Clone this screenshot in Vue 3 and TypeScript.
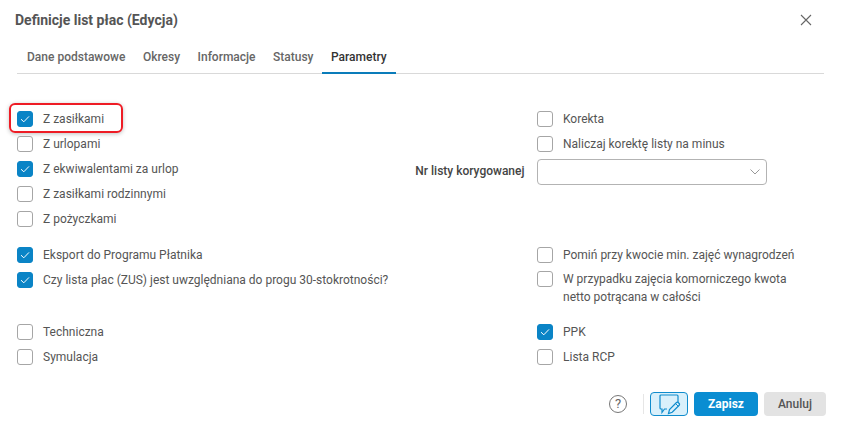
<script setup lang="ts">
interface Item { label: string; checked?: boolean }
const tabs = ['Dane podstawowe', 'Okresy', 'Informacje', 'Statusy', 'Parametry']
const groupA: Item[] = [
  { label: 'Z urlopami' },
  { label: 'Z ekwiwalentami za urlop', checked: true },
  { label: 'Z zasiłkami rodzinnymi' },
  { label: 'Z pożyczkami' },
]
const groupB: Item[] = [
  { label: 'Eksport do Programu Płatnika', checked: true },
  { label: 'Czy lista płac (ZUS) jest uwzględniana do progu 30-stokrotności?', checked: true },
]
const groupC: Item[] = [{ label: 'Techniczna' }, { label: 'Symulacja' }]
const groupD: Item[] = [{ label: 'PPK', checked: true }, { label: 'Lista RCP' }]
</script>

<template>
  <div class="dialog">
    <header class="head">
      <h1>Definicje list płac (Edycja)</h1>
      <svg class="close" width="12" height="12" viewBox="0 0 12 12"><path d="M1 1l10 10M11 1L1 11" stroke="#666" stroke-width="1.1" fill="none" /></svg>
    </header>
    <nav class="tabs">
      <span v-for="(t, i) in tabs" :key="t" class="tab" :class="{ active: i === 4 }">{{ t }}</span>
    </nav>
    <main class="body">
      <section class="grid first">
        <div class="col">
          <label class="row highlighted">
            <span class="box on"><svg width="16" height="16" viewBox="0 0 16 16"><path d="M4 8.2l2.8 2.6L12 5.4" stroke="#fff" stroke-width="1" fill="none" /></svg></span>
            <span>Z zasiłkami</span>
          </label>
          <label v-for="it in groupA" :key="it.label" class="row">
            <span class="box" :class="{ on: it.checked }"><svg v-if="it.checked" width="16" height="16" viewBox="0 0 16 16"><path d="M4 8.2l2.8 2.6L12 5.4" stroke="#fff" stroke-width="1" fill="none" /></svg></span>
            <span>{{ it.label }}</span>
          </label>
        </div>
        <div class="col right">
          <label class="row"><span class="box"></span><span>Korekta</span></label>
          <label class="row"><span class="box"></span><span>Naliczaj korektę listy na minus</span></label>
          <div class="select-row">
            <span class="select-label">Nr listy korygowanej</span>
            <div class="select">
              <svg width="10" height="6" viewBox="0 0 10 6"><path d="M.5.5L5 5 9.5.5" stroke="#999" stroke-width="1" fill="none" /></svg>
            </div>
          </div>
        </div>
      </section>
      <section class="grid second">
        <div class="col">
          <label v-for="it in groupB" :key="it.label" class="row">
            <span class="box" :class="{ on: it.checked }"><svg width="16" height="16" viewBox="0 0 16 16"><path d="M4 8.2l2.8 2.6L12 5.4" stroke="#fff" stroke-width="1" fill="none" /></svg></span>
            <span>{{ it.label }}</span>
          </label>
        </div>
        <div class="col right">
          <label class="row"><span class="box"></span><span>Pomiń przy kwocie min. zajęć wynagrodzeń</span></label>
          <label class="row tall"><span class="box"></span><span class="wrap">W przypadku zajęcia komorniczego kwota netto potrącana w całości</span></label>
        </div>
      </section>
      <section class="grid third">
        <div class="col">
          <label v-for="it in groupC" :key="it.label" class="row"><span class="box"></span><span>{{ it.label }}</span></label>
        </div>
        <div class="col right">
          <label v-for="it in groupD" :key="it.label" class="row">
            <span class="box" :class="{ on: it.checked }"><svg v-if="it.checked" width="16" height="16" viewBox="0 0 16 16"><path d="M4 8.2l2.8 2.6L12 5.4" stroke="#fff" stroke-width="1" fill="none" /></svg></span>
            <span>{{ it.label }}</span>
          </label>
        </div>
      </section>
    </main>
    <footer class="foot">
      <span class="help">?</span>
      <span class="sep"></span>
      <button class="btn icon" type="button">
        <svg width="26" height="22" viewBox="0 0 26 22">
          <path d="M11 16H8.5L6 19.5V16H5a1 1 0 0 1-1-1V3a1 1 0 0 1 1-1h16a1 1 0 0 1 1 1v8" stroke="#0f8ccd" stroke-width="1.2" fill="none" />
          <path d="M12.5 20.5l1-4 7-7a1.2 1.2 0 0 1 1.7 0l1 1a1.2 1.2 0 0 1 0 1.7l-7 7z" stroke="#0f8ccd" stroke-width="1.2" fill="#d9f0fb" />
          <path d="M19.5 10.5l2.8 2.8" stroke="#0f8ccd" stroke-width="1" fill="none" />
        </svg>
      </button>
      <button class="btn primary" type="button">Zapisz</button>
      <button class="btn muted" type="button">Anuluj</button>
    </footer>
  </div>
</template>

<style scoped>
.dialog {
  width: 841px;
  height: 425px;
  box-sizing: border-box;
  padding: 0 15px;
  background: #fff;
  font: 12px/16px Roboto, sans-serif;
  color: #555;
  display: flex;
  flex-direction: column;
  overflow: hidden;
}
.head {
  height: 40px;
  display: flex;
  align-items: center;
  justify-content: space-between;
  padding-right: 14px;
}
h1 {
  margin: 0;
  font-size: 14px;
  font-weight: 700;
  color: #555;
}
.tabs {
  height: 33px;
  margin: 0 2px;
  padding-left: 1px;
  display: flex;
  border-bottom: 1px solid #d9d9d9;
}
.tab {
  padding: 9px 9px 0;
  font-weight: 500;
  color: #666;
  white-space: nowrap;
}
.tab + .tab { margin-left: -.5px; }
.tab.active {
  color: #333;
  border-bottom: 2px solid #0a7cba;
  margin-bottom: -1px;
}
.body {
  padding: 32px 0 0 2px;
  flex: 1;
}
.grid {
  display: grid;
  grid-template-columns: 520px 1fr;
}
.second { margin-top: 11px; }
.third { margin-top: 13px; }
.col { display: flex; flex-direction: column; }
.row {
  min-height: 25px;
  display: flex;
  gap: 10px;
  align-items: center;
  position: relative;
  color: #555;
}
.tall { align-items: flex-start; padding-top: 4px; }
.wrap { width: 250px; line-height: 18px; margin-top: -1px; }
.box {
  width: 16px;
  height: 16px;
  box-sizing: border-box;
  border: 1px solid #a6a6a6;
  border-radius: 3px;
  background: #fff;
  flex: none;
  position: relative;
}
.box svg { position: absolute; left: -1px; top: -1px; display: block; }
.box.on {
  background: #0a84c6;
  border-color: #0a84c6;
}
.highlighted::after {
  content: '';
  position: absolute;
  left: -8px;
  top: -3px;
  width: 114px;
  height: 30px;
  box-sizing: border-box;
  border: 2px solid #ee1c25;
  border-radius: 6px;
  box-shadow: 0 1px 4px rgba(0, 0, 0, .25);
}
.select-row {
  position: relative;
  margin-top: 3px;
}
.select-label {
  position: absolute;
  right: 100%;
  top: 4px;
  margin-right: 12.5px;
  font-weight: 500;
  color: #444;
  white-space: nowrap;
}
.select {
  width: 230px;
  height: 26px;
  box-sizing: border-box;
  border: 1px solid #b3b3b3;
  border-radius: 4px;
  display: flex;
  align-items: center;
  justify-content: flex-end;
  padding-right: 6px;
}
.foot {
  height: 24px;
  margin-bottom: 9px;
  display: flex;
  align-items: center;
  justify-content: flex-end;
}
.help {
  width: 18px;
  height: 18px;
  box-sizing: border-box;
  border: 1px solid #777;
  border-radius: 50%;
  text-align: center;
  font-size: 13px;
  line-height: 16px;
  color: #666;
}
.sep {
  width: 1px;
  height: 20px;
  background: #e6e6e6;
  margin: 0 6px 0 16px;
}
.btn {
  height: 24px;
  border: 0;
  border-radius: 4px;
  font: 700 12px Roboto, sans-serif;
  margin-left: 6px;
  padding: 0;
}
.btn.icon {
  width: 38px;
  margin-left: 0;
  background: #d9f0fb;
  border: 1px solid #0f8ccd;
  display: flex;
  align-items: center;
  justify-content: center;
}
.primary { width: 64px; background: #0a8dd2; color: #fff; }
.muted { width: 62px; background: #e3e3e3; color: #555; font-weight: 500; }
</style>
